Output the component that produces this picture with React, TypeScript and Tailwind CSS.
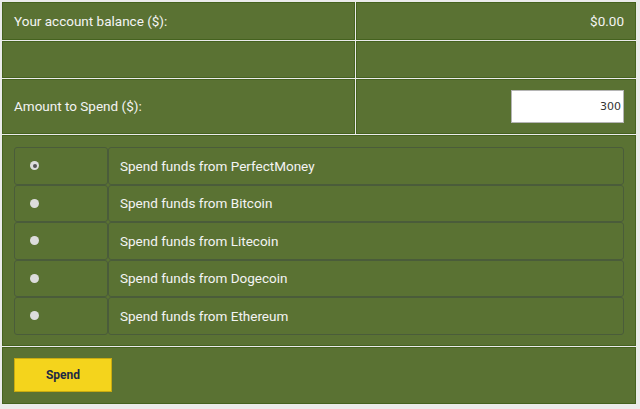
import React from 'react';

const options = ['PerfectMoney', 'Bitcoin', 'Litecoin', 'Dogecoin', 'Ethereum'];

export default function App() {
  return (
    <div className="min-h-[409px] w-[640px] bg-[#ebebeb] pt-[1px] pl-[1px]" style={{ fontFamily: 'Roboto, "Noto Sans", sans-serif' }}>
      <table className="w-[636px] border-separate border-spacing-[1px] text-[13.5px] text-[#f4f4f4]">
        <tbody>
          <tr>
            <td className="h-[38px] w-[353px] border border-[#45621f] bg-[#5a7233] pl-[11px]">Your account balance ($):</td>
            <td className="h-[38px] border border-[#45621f] bg-[#5a7233] pr-[11px] text-right">$0.00</td>
          </tr>
          <tr>
            <td className="h-[37px] border border-[#45621f] bg-[#5a7233]"></td>
            <td className="h-[37px] border border-[#45621f] bg-[#5a7233]"></td>
          </tr>
          <tr>
            <td className="h-[55px] border border-[#45621f] bg-[#5a7233] pl-[11px]">Amount to Spend ($):</td>
            <td className="h-[55px] border border-[#45621f] bg-[#5a7233] pr-[11px] text-right">
              <input
                defaultValue="300"
                className="h-[33px] w-[113px] border border-[#b5b5b5] bg-white px-[2px] text-right text-[11px] text-[#333] outline-none"
                style={{ fontFamily: '"DejaVu Sans", sans-serif' }}
              />
            </td>
          </tr>
          <tr>
            <td colSpan={2} className="border border-[#45621f] bg-[#5a7233] px-[11px] pt-[11px] pb-[10px]">
              <table className="w-full border-separate border-spacing-0">
                <tbody>
                  {options.map((o, i) => (
                    <tr key={o}>
                      <td className="h-[37.5px] w-[94px] rounded-[3px] border border-[#4a5c3a]">
                        <span className="ml-[15px] flex h-[9px] w-[9px] items-center justify-center rounded-full bg-[#dcdcdc]">
                          {i === 0 && <span className="h-[4px] w-[4px] rounded-full bg-[#555]" />}
                        </span>
                      </td>
                      <td className="h-[37.5px] rounded-[3px] border border-[#4a5c3a] pl-[11px]">Spend funds from {o}</td>
                    </tr>
                  ))}
                </tbody>
              </table>
            </td>
          </tr>
          <tr>
            <td colSpan={2} className="h-[57px] border border-[#45621f] bg-[#5a7233] pl-[11px]">
              <button className="h-[34px] w-[98px] border border-[#c9ab10] bg-[#f4d41c] text-[12px] font-bold text-[#1d2a44]">
                Spend
              </button>
            </td>
          </tr>
        </tbody>
      </table>
    </div>
  );
}
